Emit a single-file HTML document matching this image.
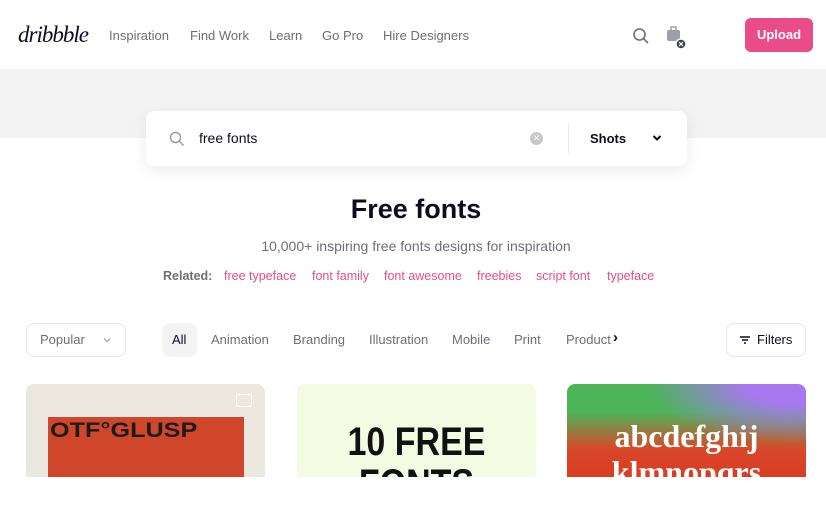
<!DOCTYPE html>
<html><head><style>
*{margin:0;padding:0;box-sizing:border-box}
body{width:826px;height:516px;background:#fff;font-family:"Liberation Sans",sans-serif;position:relative;overflow:hidden;color:#0d0c22}
.a{position:absolute}
.nav{font-size:13px;color:#6e6d7a;top:28px}
.band{left:0;top:69px;width:826px;height:69px;background:#f3f3f4}
.search{left:146px;top:111px;width:541px;height:55px;background:#fff;border-radius:8px;box-shadow:0 4px 16px rgba(0,0,0,.08)}
.rel{top:269px;font-size:12.5px;color:#ea4c89}
.tab{top:332px;font-size:13px;color:#6e6d7a}
.card{top:384px;width:239px;height:93px;border-radius:8px 8px 0 0;overflow:hidden}
</style></head><body>
<div class="a" style="left:18px;top:22px;font-family:'Liberation Serif',serif;font-style:italic;font-size:23px;letter-spacing:-1px">dribbble</div>
<div class="a nav" style="left:109px">Inspiration</div>
<div class="a nav" style="left:190px">Find Work</div>
<div class="a nav" style="left:269px">Learn</div>
<div class="a nav" style="left:322px">Go Pro</div>
<div class="a nav" style="left:383px">Hire Designers</div>
<svg class="a" style="left:632px;top:27px" width="18" height="18" viewBox="0 0 18 18"><circle cx="7.5" cy="7.5" r="5.5" fill="none" stroke="#6e6d7a" stroke-width="1.6"/><path d="M11.5 11.5L16 16" stroke="#6e6d7a" stroke-width="1.6"/></svg>
<svg class="a" style="left:666px;top:25px" width="22" height="26" viewBox="0 0 22 26"><rect x="1" y="5" width="13" height="11" rx="2" fill="#9e9ea7"/><rect x="5" y="2" width="5" height="4" fill="none" stroke="#9e9ea7" stroke-width="1.5"/><circle cx="15" cy="19" r="5" fill="#3d3d4e" stroke="#fff" stroke-width="1.5"/><path d="M13 17l4 4M17 17l-4 4" stroke="#fff" stroke-width="1.2"/></svg>
<div class="a" style="left:745px;top:18px;width:68px;height:34px;background:#ea4c89;border-radius:6px;color:#fff;font-size:13px;font-weight:bold;text-align:center;line-height:34px">Upload</div>
<div class="a band"></div>
<div class="a search">
<svg class="a" style="left:23px;top:20px" width="16" height="16" viewBox="0 0 16 16"><circle cx="6.5" cy="6.5" r="5" fill="none" stroke="#9e9ea7" stroke-width="1.5"/><path d="M10 10l4.5 4.5" stroke="#9e9ea7" stroke-width="1.5"/></svg>
<div class="a" style="left:53px;top:19px;font-size:14px;color:#0d0c22">free fonts</div>
<div class="a" style="left:384px;top:21px;width:13px;height:13px;border-radius:50%;background:#c8c8cc;color:#fff;font-size:9px;text-align:center;line-height:13px">✕</div>
<div class="a" style="left:422px;top:12px;width:1px;height:30px;background:#e7e7e9"></div>
<div class="a" style="left:444px;top:20px;font-size:13px;font-weight:bold">Shots</div>
<svg class="a" style="left:506px;top:23px" width="10" height="8" viewBox="0 0 10 8"><path d="M1.5 2l3.5 3.5L8.5 2" fill="none" stroke="#0d0c22" stroke-width="2"/></svg>
</div>
<div class="a" style="left:0;width:832px;top:194px;text-align:center;font-size:27px;font-weight:bold">Free fonts</div>
<div class="a" style="left:0;width:832px;top:238px;text-align:center;font-size:14px;color:#6e6d7a">10,000+ inspiring free fonts designs for inspiration</div>
<div class="a" style="left:163px;top:269px;font-size:12.5px;color:#6e6d7a;font-weight:bold">Related:</div>
<div class="a rel" style="left:224px">free typeface</div>
<div class="a rel" style="left:312px">font family</div>
<div class="a rel" style="left:384px">font awesome</div>
<div class="a rel" style="left:477px">freebies</div>
<div class="a rel" style="left:536px">script font</div>
<div class="a rel" style="left:607px">typeface</div>
<div class="a" style="left:26px;top:323px;width:100px;height:34px;border:1px solid #e7e7e9;border-radius:8px"></div>
<div class="a tab" style="left:40px">Popular</div>
<svg class="a" style="left:103px;top:337px" width="8" height="6" viewBox="0 0 8 6"><path d="M1 1.5l3 3 3-3" fill="none" stroke="#9e9ea7" stroke-width="1.2"/></svg>
<div class="a" style="left:162px;top:323px;width:35px;height:34px;background:#f3f3f4;border-radius:8px"></div>
<div class="a tab" style="left:172px;color:#0d0c22">All</div>
<div class="a tab" style="left:211px">Animation</div>
<div class="a tab" style="left:293px">Branding</div>
<div class="a tab" style="left:369px">Illustration</div>
<div class="a tab" style="left:452px">Mobile</div>
<div class="a tab" style="left:514px">Print</div>
<div class="a tab" style="left:566px">Product</div>
<div class="a" style="left:613px;top:329px;font-size:15px;font-weight:bold">›</div>
<div class="a" style="left:726px;top:323px;width:80px;height:34px;border:1px solid #e7e7e9;border-radius:8px"></div>
<svg class="a" style="left:739px;top:335px" width="12" height="10" viewBox="0 0 12 10"><path d="M1 2h10M3 5h6M5 8h2" stroke="#0d0c22" stroke-width="1.4"/></svg>
<div class="a tab" style="left:757px;color:#0d0c22">Filters</div>
<div class="a card" style="left:26px;background:#ece8df">
<div class="a" style="left:22px;top:33px;width:196px;height:70px;background:#d0462a"></div>
<div class="a" style="left:24px;top:35px;font-size:21px;font-weight:900;color:#1b1b1b;font-family:'Liberation Sans';transform:scaleX(1.2);transform-origin:left">OTF°GLUSP</div>
<div class="a" style="left:210px;top:10px;width:16px;height:13px;border:1.5px solid #fff;border-radius:3px"></div>
</div>
<div class="a card" style="left:297px;background:#f3fbe2">
<div class="a" style="left:0;width:239px;top:36px;text-align:center;font-size:40px;font-weight:bold;color:#111;transform:scaleX(.85)">10 FREE</div>
<div class="a" style="left:0;width:239px;top:78px;text-align:center;font-size:40px;font-weight:bold;color:#111;transform:scaleX(.85)">FONTS</div>
</div>
<div class="a card" style="left:567px;background:radial-gradient(ellipse at 95% 0%,#a778ef 0,#a778ef 15%,transparent 45%),linear-gradient(180deg,#4cb55a 0,#4cb55a 30%,#d9472a 70%,#d93d22 100%)">
<div class="a" style="left:0;width:239px;top:34px;text-align:center;font-family:'Liberation Serif',serif;font-size:32px;font-weight:bold;color:#fff">abcdefghij</div>
<div class="a" style="left:0;width:239px;top:70px;text-align:center;font-family:'Liberation Serif',serif;font-size:32px;font-weight:bold;color:#fff">klmnopqrs</div>
</div>
</body></html>
